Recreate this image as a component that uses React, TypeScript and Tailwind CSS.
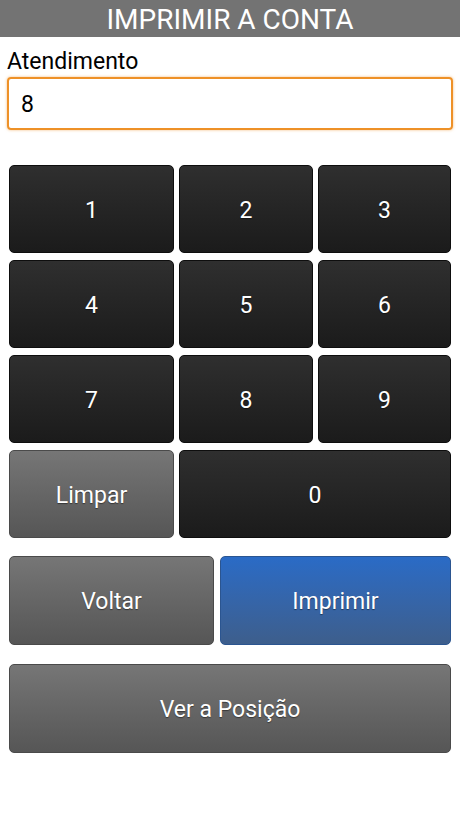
import { useState } from "react";

const DIGITS = ["1", "2", "3", "4", "5", "6", "7", "8", "9"] as const;

const base =
  "flex items-center justify-center rounded-[5px] border pt-[4px] text-[23px] text-white [text-shadow:0_1px_1px_rgba(0,0,0,0.45)]";
const dark = `${base} border-[#0e0e0e] bg-gradient-to-b from-[#2f2f2f] to-[#1b1b1b]`;
const gray = `${base} border-[#4a4a4a] bg-gradient-to-b from-[#767676] to-[#565656]`;
const blue = `${base} border-[#2b5590] bg-gradient-to-b from-[#2a6bc6] to-[#3d5e8c]`;

export default function App() {
  const [value, setValue] = useState("8");

  return (
    <div className="min-h-[818px] w-[460px] bg-white font-['Roboto',sans-serif]">
      <div className="flex h-[37px] items-center justify-center bg-[#737373] pt-[2px] text-[28px] leading-none text-white">
        IMPRIMIR A CONTA
      </div>

      <div className="px-[7px] pt-[12px]">
        <label className="block text-[23px] leading-[26px] text-black">Atendimento</label>
        <input
          type="text"
          value={value}
          onChange={(e) => setValue(e.target.value)}
          className="mt-[2px] h-[53px] w-full rounded-[4px] border-2 border-[#ee9127] px-[12px] pt-[2px] text-[23px] text-black shadow-[0_0_3px_rgba(238,145,39,0.6)] outline-none"
        />
      </div>

      <div className="grid grid-cols-[165px_134px_133px] gap-x-[5px] gap-y-[7px] px-[9px] pt-[35px] [grid-auto-rows:88px]">
        {DIGITS.map((d) => (
          <button key={d} type="button" onClick={() => setValue(value + d)} className={dark}>
            {d}
          </button>
        ))}
        <button type="button" onClick={() => setValue("")} className={gray}>
          Limpar
        </button>
        <button type="button" onClick={() => setValue(value + "0")} className={`${dark} col-span-2`}>
          0
        </button>
      </div>

      <div className="grid grid-cols-[205px_231px] gap-x-[6px] px-[9px] pt-[18px]">
        <button type="button" className={`${gray} h-[89px]`}>
          Voltar
        </button>
        <button type="button" className={`${blue} h-[89px]`}>
          Imprimir
        </button>
      </div>

      <div className="px-[9px] pt-[19px]">
        <button type="button" className={`${gray} h-[89px] w-full`}>
          Ver a Posição
        </button>
      </div>
    </div>
  );
}
